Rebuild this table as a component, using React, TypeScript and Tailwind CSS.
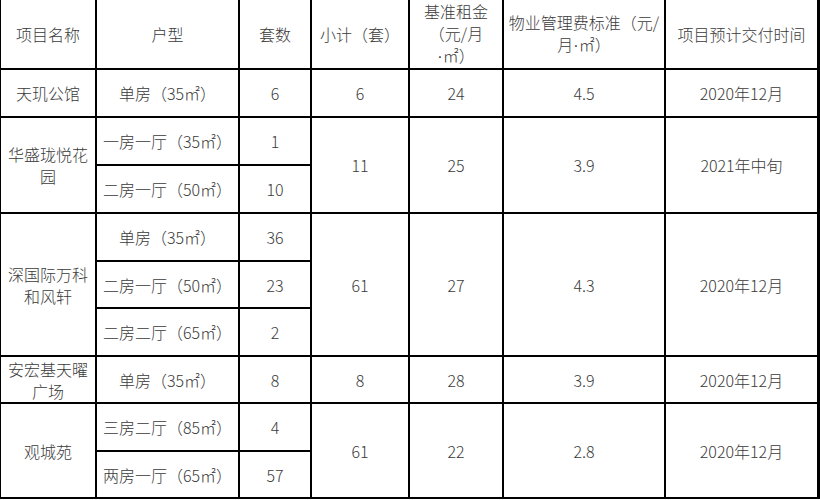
import React from "react";

const cell =
  "bg-white flex items-center justify-center text-center px-[6px] text-[16px] leading-[22px] text-[#3a3a3a] font-light";

const Dot = () => (
  <span style={{ fontFamily: '"Liberation Sans", sans-serif' }}>·</span>
);

export default function App() {
  return (
    <div
      className="w-[820px] h-[500px] bg-white"
      style={{ fontFamily: '"Noto Sans CJK SC", "Noto Sans", sans-serif' }}
    >
      <div className="w-[820px] h-[499px] bg-black pl-[1px] pr-[3px] pb-[2px] grid gap-[2px] grid-cols-[94px_141px_70px_96px_92px_160px_151px] grid-rows-[68px_46px_46px_46px_46px_45px_46px_45px_46px_45px]">
        {/* header */}
        <div className={cell}>项目名称</div>
        <div className={cell}>户型</div>
        <div className={cell}>套数</div>
        <div className={cell}>小计（套）</div>
        <div className={cell}>
          <div>
            基准租金
            <br />
            （元/月
            <br />
            <Dot />㎡）
          </div>
        </div>
        <div className={`${cell} !px-0 whitespace-nowrap`}>
          <div>
            物业管理费标准（元/
            <br />
            月<Dot />㎡）
          </div>
        </div>
        <div className={cell}>项目预计交付时间</div>

        {/* 天玑公馆 */}
        <div className={cell}>天玑公馆</div>
        <div className={cell}>单房（35㎡）</div>
        <div className={cell}>6</div>
        <div className={cell}>6</div>
        <div className={cell}>24</div>
        <div className={cell}>4.5</div>
        <div className={cell}>2020年12月</div>

        {/* 华盛珑悦花园 */}
        <div className={`${cell} row-span-2`}>华盛珑悦花园</div>
        <div className={cell}>一房一厅（35㎡）</div>
        <div className={cell}>1</div>
        <div className={`${cell} row-span-2`}>11</div>
        <div className={`${cell} row-span-2`}>25</div>
        <div className={`${cell} row-span-2`}>3.9</div>
        <div className={`${cell} row-span-2`}>2021年中旬</div>
        <div className={cell}>二房一厅（50㎡）</div>
        <div className={cell}>10</div>

        {/* 深国际万科和风轩 */}
        <div className={`${cell} row-span-3`}>深国际万科和风轩</div>
        <div className={cell}>单房（35㎡）</div>
        <div className={cell}>36</div>
        <div className={`${cell} row-span-3`}>61</div>
        <div className={`${cell} row-span-3`}>27</div>
        <div className={`${cell} row-span-3`}>4.3</div>
        <div className={`${cell} row-span-3`}>2020年12月</div>
        <div className={cell}>二房一厅（50㎡）</div>
        <div className={cell}>23</div>
        <div className={cell}>二房二厅（65㎡）</div>
        <div className={cell}>2</div>

        {/* 安宏基天曜广场 */}
        <div className={cell}>安宏基天曜广场</div>
        <div className={cell}>单房（35㎡）</div>
        <div className={cell}>8</div>
        <div className={cell}>8</div>
        <div className={cell}>28</div>
        <div className={cell}>3.9</div>
        <div className={cell}>2020年12月</div>

        {/* 观城苑 */}
        <div className={`${cell} row-span-2`}>观城苑</div>
        <div className={cell}>三房二厅（85㎡）</div>
        <div className={cell}>4</div>
        <div className={`${cell} row-span-2`}>61</div>
        <div className={`${cell} row-span-2`}>22</div>
        <div className={`${cell} row-span-2`}>2.8</div>
        <div className={`${cell} row-span-2`}>2020年12月</div>
        <div className={cell}>两房一厅（65㎡）</div>
        <div className={cell}>57</div>
      </div>
    </div>
  );
}
